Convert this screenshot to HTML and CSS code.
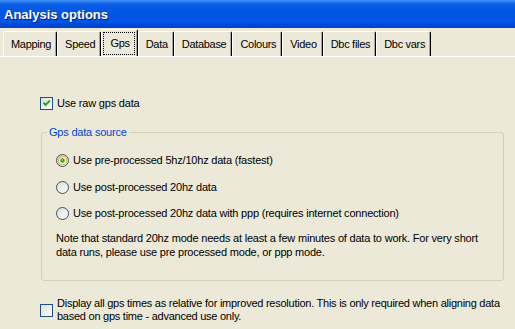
FILE: index.html
```html
<!DOCTYPE html>
<html>
<head>
<meta charset="utf-8">
<link rel="stylesheet" href="styles.css">
</head>
<body>
<div class="window">
  <div class="titlebar"><span class="title">Analysis options</span></div>
  <div class="tabs">
    <div class="tab">Mapping</div>
    <div class="tab">Speed</div>
    <div class="tab selected"><span class="focus">Gps</span></div>
    <div class="tab">Data</div>
    <div class="tab">Database</div>
    <div class="tab">Colours</div>
    <div class="tab">Video</div>
    <div class="tab">Dbc files</div>
    <div class="tab">Dbc vars</div>
  </div>
  <div class="panel">
    <div class="check-row first">
      <svg class="box" width="13" height="13" viewBox="0 0 13 13">
        <defs><linearGradient id="cbg" x1="0" y1="0" x2="1" y2="1"><stop offset="0" stop-color="#DCDCD7"/><stop offset="1" stop-color="#FFFFFF"/></linearGradient></defs>
        <rect x="0.5" y="0.5" width="12" height="12" fill="url(#cbg)" stroke="#1C5180"/>
        <path d="M3.5 5.5 L5.5 8 L9.8 3.6" stroke="#21A121" stroke-width="2" fill="none"/>
      </svg>
      <span class="label">Use raw gps data</span>
    </div>
    <fieldset class="group">
      <legend class="legend">Gps data source</legend>
      <div class="radio-row r1">
        <svg class="rb" width="13" height="13" viewBox="0 0 13 13">
          <defs><linearGradient id="rbg" x1="0" y1="0" x2="1" y2="1"><stop offset="0" stop-color="#DCDCD7"/><stop offset="1" stop-color="#FFFFFF"/></linearGradient></defs>
          <circle cx="6.5" cy="6.5" r="6" fill="url(#rbg)" stroke="#2F5376"/>
          <circle cx="6.5" cy="6.5" r="4.3" fill="none" stroke="#F5B94B" stroke-width="1.6"/>
          <circle cx="6.5" cy="6.5" r="2.2" fill="#2FA52F"/>
          <circle cx="6" cy="6" r="0.8" fill="#8CD88C"/>
        </svg>
        <span class="label">Use pre-processed 5hz/10hz data (fastest)</span>
      </div>
      <div class="radio-row r2">
        <svg class="rb" width="13" height="13" viewBox="0 0 13 13">
          <circle cx="6.5" cy="6.5" r="6" fill="url(#rbg)" stroke="#2F5376"/>
        </svg>
        <span class="label">Use post-processed 20hz data</span>
      </div>
      <div class="radio-row r3">
        <svg class="rb" width="13" height="13" viewBox="0 0 13 13">
          <circle cx="6.5" cy="6.5" r="6" fill="url(#rbg)" stroke="#2F5376"/>
        </svg>
        <span class="label">Use post-processed 20hz data with ppp (requires internet connection)</span>
      </div>
      <p class="note">Note that standard 20hz mode needs at least a few minutes of data to work. For very short<br>data runs, please use pre processed mode, or ppp mode.</p>
    </fieldset>
    <div class="check-row last">
      <svg class="box" width="13" height="13" viewBox="0 0 13 13">
        <rect x="0.5" y="0.5" width="12" height="12" fill="url(#cbg)" stroke="#1C5180"/>
      </svg>
      <span class="label multi">Display all gps times as relative for improved resolution. This is only required when aligning data<br>based on gps time - advanced use only.</span>
    </div>
  </div>
</div>
</body>
</html>
```
FILE: styles.css
```css
html, body {
  margin: 0;
  padding: 0;
  background: #ECE9D8;
}
body {
  font-family: "Liberation Sans", Arial, sans-serif;
  font-size: 11px;
  letter-spacing: -0.2px;
  color: #000;
  width: 515px;
  height: 329px;
  overflow: hidden;
}
.window {
  display: flex;
  flex-direction: column;
}
.titlebar {
  height: 28px;
  box-sizing: border-box;
  background: linear-gradient(to bottom, #3D8EF5 0px, #2A7CF0 2px, #0A5EE6 4px, #0057E4 12px, #0054E3 22px, #0046D6 25px, #0042CF 28px);
  display: flex;
  align-items: center;
  padding-left: 4px;
}
.title {
  color: #fff;
  font-weight: bold;
  font-size: 13px;
  letter-spacing: 0;
  text-shadow: 1px 1px 0 #0A1A80;
}
.tabs {
  display: flex;
  align-items: flex-end;
  height: 29px;
  box-sizing: border-box;
  padding-left: 3px;
  border-bottom: 1px solid #FFFFFF;
}
.tab {
  height: 25px;
  box-sizing: border-box;
  padding: 0 5px 0 7px;
  display: flex;
  align-items: center;
  border-left: 1px solid #FFFFFF;
  border-top: 1px solid #FFFFFF;
  border-right: 1px solid #000;
  border-top-left-radius: 2px;
  border-top-right-radius: 2px;
  box-shadow: inset -1px 0 0 #ACA899;
  white-space: nowrap;
  letter-spacing: -0.3px;
}
.tab.selected {
  height: 27px;
  padding: 0 2px 0 1px;
}
.focus {
  border: 1px dotted #000;
  padding: 4px 4px 4px 6px;
  line-height: 13px;
}
.panel {
  display: flex;
  flex-direction: column;
  padding: 0 11px 0 40px;
}
.check-row {
  display: flex;
  align-items: center;
  gap: 4px;
  white-space: nowrap;
}
.check-row.first {
  margin-top: 40px;
  height: 13px;
}
.check-row.last {
  margin-top: 16px;
}
.box {
  flex: none;
  display: block;
}
.label {
  line-height: 13px;
}
.multi {
  letter-spacing: -0.25px;
}
.group {
  margin: 15px 0 0 1px;
  padding: 15px 14px 21px 14px;
  border: 1px solid #D0D0BF;
  border-radius: 3px;
  min-width: 0;
}
.legend {
  color: #0046D5;
  padding: 0 2px;
  margin-left: -9px;
  line-height: 14px;
}
.radio-row {
  display: flex;
  align-items: center;
  gap: 4px;
  height: 13px;
  white-space: nowrap;
}
.rb {
  flex: none;
  display: block;
}
.r2 { margin-top: 14px; }
.r3 { margin-top: 13px; }
.note {
  margin: 11px 0 0 0;
  line-height: 14px;
  white-space: nowrap;
}
```
